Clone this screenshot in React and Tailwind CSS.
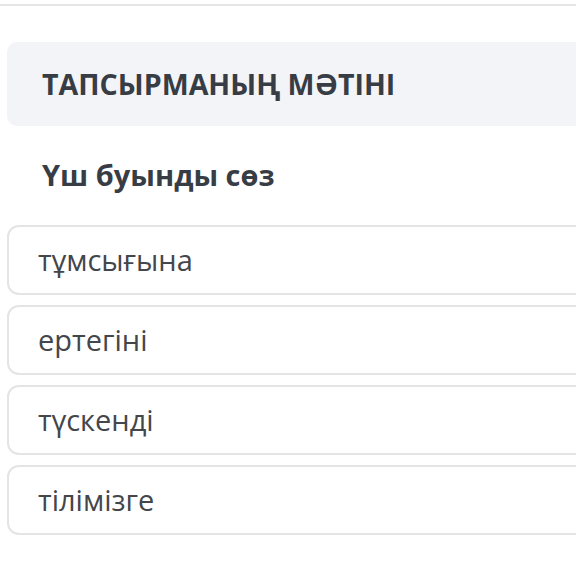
import React from 'react';

const options = ['тұмсығына', 'ертегіні', 'түскенді', 'тілімізге'];

export default function App() {
  return (
    <div className="w-[576px] h-[585px] overflow-hidden bg-white font-['Open_Sans',sans-serif]">
      <div className="mt-1 h-[2px] bg-[#e5e6e8]" />
      <div className="w-[640px] pl-[7px] pt-[36px]">
        <div className="flex h-[84px] items-center rounded-[10px] bg-[#f3f4f7] pl-[35px]">
          <h2 className="text-[28.6px] font-bold leading-none text-[#383d45]">ТАПСЫРМАНЫҢ МӘТІНІ</h2>
        </div>
        <p className="mt-[30px] pl-[35px] text-[29px] font-bold leading-[38px] text-[#383d45]">Үш буынды сөз</p>
        <div className="mt-[31px] flex flex-col gap-[10px]">
          {options.map((o) => (
            <div
              key={o}
              className="flex h-[70px] items-center rounded-[12px] border-2 border-[#e3e4e6] pl-[29px] text-[29px] text-[#43464a]"
            >
              {o}
            </div>
          ))}
        </div>
      </div>
    </div>
  );
}
